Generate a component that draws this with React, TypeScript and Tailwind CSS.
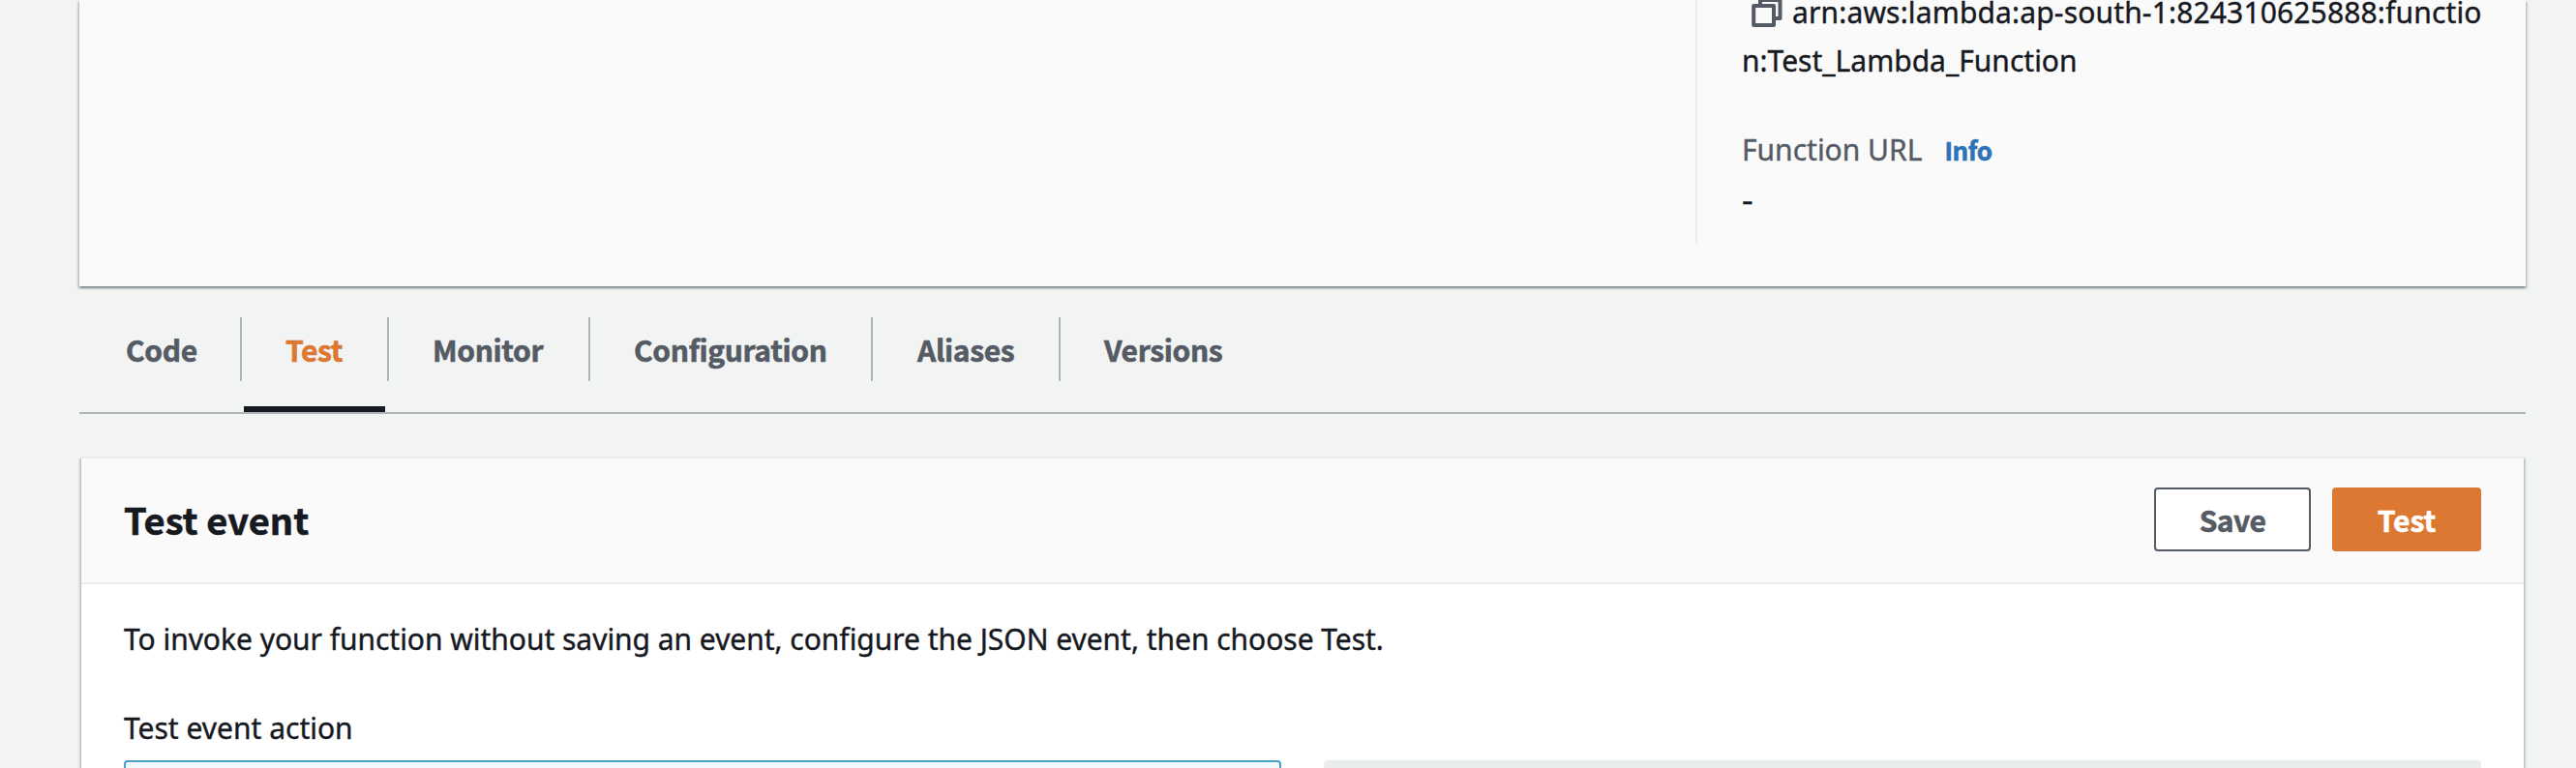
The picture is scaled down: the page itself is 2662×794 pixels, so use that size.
type Tab = { label: string; width: string; active?: boolean };

const tabs: Tab[] = [
  { label: "Code", width: "w-[168px] pl-12" },
  { label: "Test", width: "w-[152px] pl-[45px]", active: true },
  { label: "Monitor", width: "w-[208px] pl-[45px]" },
  { label: "Configuration", width: "w-[292px] pl-[45px]" },
  { label: "Aliases", width: "w-[194px] pl-[46px]" },
  { label: "Versions", width: "w-[214px] pl-[45px]" },
];

const bold = "font-['Noto_Sans_CJK_JP','Noto_Sans',sans-serif] font-bold [-webkit-text-stroke:0.6px_currentColor]";

function CopyIcon() {
  return (
    <svg className="h-8 w-[34px] shrink-0" viewBox="0 0 34 32" fill="none" stroke="#545b64" strokeWidth="4" strokeLinejoin="round">
      <path d="M10 8V3H30.5V22H25" />
      <rect x="3.2" y="9" width="20.8" height="20" />
    </svg>
  );
}

function FunctionDetails() {
  return (
    <section className="flex h-[296px] shrink-0 bg-[#fafafa] shadow-[0_2px_2px_rgba(0,28,36,0.3),2px_2px_2px_rgba(0,28,36,0.15),-2px_2px_2px_rgba(0,28,36,0.15)]">
      <div className="w-[1670px]" />
      <div className="h-[252px] w-[810px] border-l-2 border-[#eaeded] pl-[46px] text-[30px]">
        <div className="-mt-[12px] flex h-[50px] items-center pl-[9px] leading-[50px]">
          <CopyIcon />
          <span className="ml-[9px] tracking-[0.15px] whitespace-nowrap">arn:aws:lambda:ap-south-1:824310625888:functio</span>
        </div>
        <div className="h-[50px] leading-[50px]">n:Test_Lambda_Function</div>
        <div className="mt-[42px] flex h-[50px] items-baseline leading-[50px] text-[#545b64]">
          <span>Function URL</span>
          <a className={`ml-[23px] text-[26px] tracking-[-0.4px] text-[#2e73b8] ${bold}`}>Info</a>
        </div>
        <div className="h-[54px] w-3 origin-left scale-x-[1.2] leading-[54px]">-</div>
      </div>
    </section>
  );
}

function Tabs() {
  return (
    <nav className="mt-8 flex h-[100px] shrink-0 border-b-2 border-[#aab7b8]">
      {tabs.map((tab, i) => (
        <div key={tab.label} className={`relative h-[66px] ${i < tabs.length - 1 ? "border-r-2" : ""} border-[#aab7b8] ${tab.width}`}>
          <span className={`block text-[30px] leading-[66px] tracking-[-0.35px] ${bold} ${tab.active ? "text-[#dd7832]" : "text-[#545b64]"}`}>{tab.label}</span>
          {tab.active && <span className="absolute top-[92px] left-[2px] h-[6px] w-[146px] bg-[#16191f]" />}
        </div>
      ))}
    </nav>
  );
}

function TestEvent() {
  return (
    <section className="mx-[2px] mt-11 h-[400px] shrink-0 border-t-2 border-[#eaeded] bg-white shadow-[0_2px_2px_rgba(0,28,36,0.3),2px_2px_2px_rgba(0,28,36,0.15),-2px_2px_2px_rgba(0,28,36,0.15)]">
      <header className="flex h-[130px] items-start border-b-2 border-[#eaeded] bg-[#fafafa] pt-[30px] pr-11 pl-11">
        <h2 className={`flex-1 text-[38px] leading-[66px] ${bold}`}>Test event</h2>
        <button className={`h-[66px] w-[162px] rounded-[4px] border-2 border-[#545b64] bg-white text-[30px] leading-[62px] tracking-[-0.6px] text-[#545b64] ${bold}`}>Save</button>
        <button className={`ml-[22px] h-[66px] w-[154px] rounded-[4px] bg-[#dd7832] text-[30px] leading-[66px] text-white ${bold}`}>Test</button>
      </header>
      <div className="px-11 pt-8 text-[30px] leading-[50px]">
        <p className="tracking-[-0.03px] whitespace-nowrap">To invoke your function without saving an event, configure the JSON event, then choose Test.</p>
        <p className="mt-[42px]">Test event action</p>
        <div className="mt-2 flex gap-11">
          <div className="h-20 w-[1196px] rounded-[4px] border-2 border-[#4aa0c8] bg-[#f1faff]" />
          <div className="h-20 w-[1196px] rounded-[4px] bg-[#eaeded]" />
        </div>
      </div>
    </section>
  );
}

export default function App() {
  return (
    <main className="flex h-[794px] w-[2662px] flex-col overflow-hidden bg-[#f2f3f3] pr-[52px] pl-[82px] font-['Noto_Sans',sans-serif] text-[#16191f] [-webkit-text-stroke:0.4px_currentColor]">
      <FunctionDetails />
      <Tabs />
      <TestEvent />
    </main>
  );
}
